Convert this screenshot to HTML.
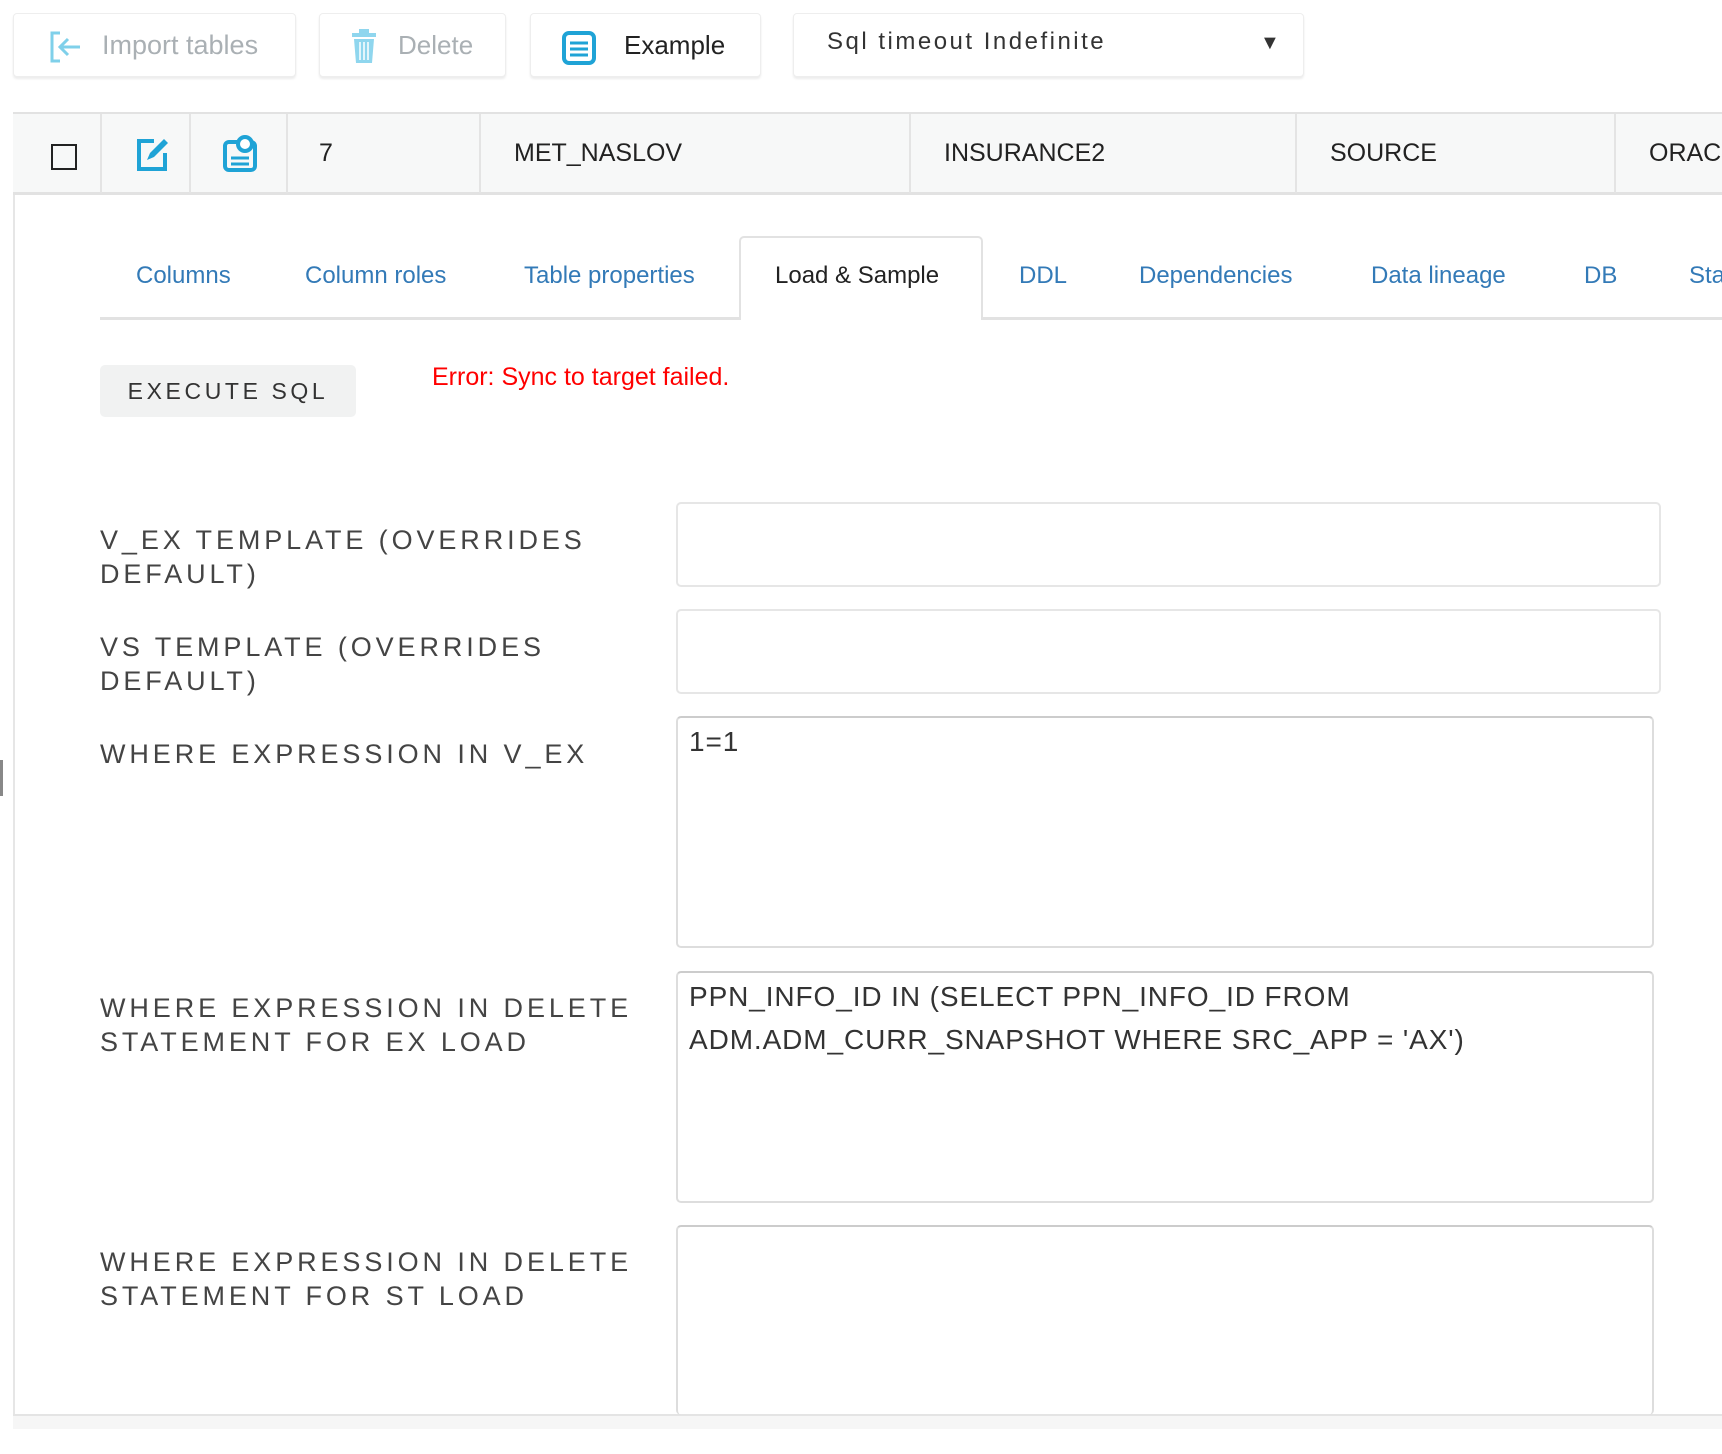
<!DOCTYPE html>
<html><head><meta charset="utf-8"><style>
*{box-sizing:border-box;margin:0;padding:0}
body{width:1722px;height:1454px;background:#fff;font-family:"Liberation Sans",Arial,sans-serif;position:relative;overflow:hidden;color:#333}
.a{position:absolute}
.btn{position:absolute;top:13px;height:64px;border:1px solid #eee;border-radius:4px;background:#fff;box-shadow:0 2px 2px rgba(0,0,0,.08);font-size:26px;display:flex;align-items:center}
.cell{position:absolute;top:114px;height:79px;border-left:2px solid #e4e4e4;font-size:25px;line-height:79px;color:#222}
.tab{position:absolute;top:262px;font-size:24px;color:#337ab7;white-space:nowrap}
.lbl{position:absolute;left:100px;font-size:27px;letter-spacing:3.9px;color:#444;line-height:34px;white-space:nowrap}
.inp{position:absolute;left:676px;border:2px solid #e6e6e6;border-radius:5px;background:#fff}
.ta{position:absolute;left:676px;width:978px;border:2px solid #ddd;border-top-color:#ccc;border-radius:5px;font-size:28px;letter-spacing:0.9px;color:#333;line-height:43px;padding:2px 11px}
</style></head><body>

<div class="btn" style="left:13px;width:283px;color:#aab0b4">
 <svg class="a" style="left:34px;top:16px" width="36" height="34" viewBox="0 0 36 34"><path d="M12 3H4v28h8" fill="none" stroke="#7fd0ea" stroke-width="3"/><path d="M32 17H13M20 9l-8 8 8 8" fill="none" stroke="#7fd0ea" stroke-width="3"/></svg>
 <span class="a" style="left:88px;font-size:27px">Import tables</span></div>
<div class="btn" style="left:319px;width:187px;color:#aab0b4">
 <svg class="a" style="left:30px;top:14px" width="28" height="36" viewBox="0 0 28 36"><rect x="9" y="1" width="10" height="4" fill="#8fd6ee"/><rect x="2" y="5" width="24" height="4" fill="#8fd6ee"/><path d="M4 11h20l-2 24H6z" fill="#8fd6ee"/><path d="M10 14v18M14 14v18M18 14v18" stroke="#fff" stroke-width="1.5"/></svg>
 <span class="a" style="left:78px">Delete</span></div>
<div class="btn" style="left:530px;width:231px;color:#222">
 <svg class="a" style="left:30px;top:16px" width="36" height="36" viewBox="0 0 36 36"><rect x="3" y="3" width="30" height="30" rx="5" fill="none" stroke="#1fa3d6" stroke-width="4"/><path d="M9 13h18M9 19h18M9 25h18" stroke="#1fa3d6" stroke-width="3"/></svg>
 <span class="a" style="left:93px">Example</span></div>
<div class="btn" style="left:793px;width:511px;color:#333;font-size:24px;letter-spacing:2.5px">
 <span class="a" style="left:33px;top:14px">Sql timeout Indefinite</span>
 <span class="a" style="left:466px;top:18px;font-size:20px">▼</span></div>

<div class="a" style="left:13px;top:112px;width:1709px;height:83px;background:#f7f8f8;border-top:2px solid #e2e2e2;border-bottom:3px solid #e2e2e2"></div>
<div class="a" style="left:51px;top:144px;width:26px;height:26px;border:2px solid #222"></div>
<div class="cell" style="left:100px;width:89px"><svg class="a" style="left:32px;top:22px" width="36" height="36" viewBox="0 0 36 36"><path d="M20 5H5v28h26V17" fill="none" stroke="#1fa3d6" stroke-width="4"/><path d="M13 24l3-7L30 3l4 4-14 14z" fill="#1fa3d6"/></svg></div>
<div class="cell" style="left:189px;width:97px"><svg class="a" style="left:30px;top:20px" width="38" height="38" viewBox="0 0 38 38"><rect x="4" y="8" width="30" height="28" rx="4" fill="none" stroke="#1fa3d6" stroke-width="4"/><circle cx="24" cy="10" r="7" fill="#fff" stroke="#1fa3d6" stroke-width="4"/><path d="M10 24h18M10 30h18" stroke="#1fa3d6" stroke-width="3"/></svg></div>
<div class="cell" style="left:286px;width:193px;padding-left:31px">7</div>
<div class="cell" style="left:479px;width:430px;padding-left:33px">MET_NASLOV</div>
<div class="cell" style="left:909px;width:386px;padding-left:33px">INSURANCE2</div>
<div class="cell" style="left:1295px;width:319px;padding-left:33px">SOURCE</div>
<div class="cell" style="left:1614px;width:108px;padding-left:33px">ORACLE</div>

<div class="a" style="left:13px;top:195px;width:2px;height:1220px;background:#e6e6e6"></div>
<div class="a" style="left:13px;top:1414px;width:1709px;height:15px;background:#f6f6f6;border-top:2px solid #e4e4e4"></div>

<div class="a" style="left:100px;top:317px;width:1622px;height:3px;background:#e2e2e2"></div>
<div class="a" style="left:739px;top:236px;width:244px;height:84px;background:#fff;border:2px solid #e2e2e2;border-bottom:none;border-radius:5px 5px 0 0"></div>
<span class="tab" style="left:136px">Columns</span>
<span class="tab" style="left:305px">Column roles</span>
<span class="tab" style="left:524px">Table properties</span>
<span class="tab" style="left:775px;color:#222">Load &amp; Sample</span>
<span class="tab" style="left:1019px">DDL</span>
<span class="tab" style="left:1139px">Dependencies</span>
<span class="tab" style="left:1371px">Data lineage</span>
<span class="tab" style="left:1584px">DB</span>
<span class="tab" style="left:1689px">Status</span>

<div class="a" style="left:100px;top:365px;width:256px;height:52px;background:#f1f2f2;border-radius:5px;font-size:23px;letter-spacing:3.6px;line-height:52px;text-align:center;color:#333">EXECUTE SQL</div>
<div class="a" style="left:432px;top:363px;font-size:25px;color:#f00">Error: Sync to target failed.</div>

<div class="lbl" style="top:523px">V_EX TEMPLATE (OVERRIDES<br>DEFAULT)</div>
<div class="inp" style="top:502px;width:985px;height:85px"></div>
<div class="lbl" style="top:630px">VS TEMPLATE (OVERRIDES<br>DEFAULT)</div>
<div class="inp" style="top:609px;width:985px;height:85px"></div>
<div class="lbl" style="top:737px">WHERE EXPRESSION IN V_EX</div>
<div class="ta" style="top:716px;height:232px">1=1</div>
<div class="lbl" style="top:991px">WHERE EXPRESSION IN DELETE<br>STATEMENT FOR EX LOAD</div>
<div class="ta" style="top:971px;height:232px">PPN_INFO_ID IN (SELECT PPN_INFO_ID FROM<br>ADM.ADM_CURR_SNAPSHOT WHERE SRC_APP = 'AX')</div>
<div class="lbl" style="top:1245px">WHERE EXPRESSION IN DELETE<br>STATEMENT FOR ST LOAD</div>
<div class="ta" style="top:1225px;height:190px;border-bottom:none"></div>
<div class="a" style="left:0;top:760px;width:3px;height:36px;background:#888"></div>
</body></html>
